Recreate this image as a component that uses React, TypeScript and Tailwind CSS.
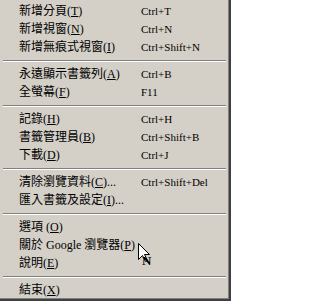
import React from "react";

type Item = { label: string; key: string; rest?: string; shortcut?: string };

// each group is separated by a etched line
const groups: Item[][] = [
  [
    { label: "新增分頁(", key: "T", rest: ")", shortcut: "Ctrl+T" },
    { label: "新增視窗(", key: "N", rest: ")", shortcut: "Ctrl+N" },
    { label: "新增無痕式視窗(", key: "I", rest: ")", shortcut: "Ctrl+Shift+N" },
  ],
  [
    { label: "永遠顯示書籤列(", key: "A", rest: ")", shortcut: "Ctrl+B" },
    { label: "全螢幕(", key: "F", rest: ")", shortcut: "F11" },
  ],
  [
    { label: "記錄(", key: "H", rest: ")", shortcut: "Ctrl+H" },
    { label: "書籤管理員(", key: "B", rest: ")", shortcut: "Ctrl+Shift+B" },
    { label: "下載(", key: "D", rest: ")", shortcut: "Ctrl+J" },
  ],
  [
    { label: "清除瀏覽資料(", key: "C", rest: ")...", shortcut: "Ctrl+Shift+Del" },
    { label: "匯入書籤及設定(", key: "I", rest: ")..." },
  ],
  [
    { label: "選項 (", key: "O", rest: ")" },
    { label: "關於 Google 瀏覽器(", key: "P", rest: ")" },
    { label: "說明(", key: "E", rest: ")" },
  ],
  [{ label: "結束(", key: "X", rest: ")" }],
];

const font = { fontFamily: '"Liberation Serif", "Noto Sans CJK TC", serif' };

const MenuRow = ({ item }: { item: Item }) => (
  <div className="flex h-[18px] shrink-0 items-center text-black">
    <div className="w-[141px] whitespace-nowrap pl-[19px] text-[12px] leading-[18px]">
      {item.label}
      <span className="underline underline-offset-1">{item.key}</span>
      {item.rest}
    </div>
    {item.shortcut && (
      <div className="whitespace-nowrap text-[11px] leading-[18px]">{item.shortcut}</div>
    )}
  </div>
);

const Separator = () => (
  <div className="flex h-[9px] shrink-0 flex-col justify-center pl-[3px] pr-[2px]">
    <div className="h-px bg-[#808080]" />
    <div className="h-px bg-white" />
  </div>
);

const Cursor = () => (
  <div className="pointer-events-none absolute left-[138px] top-[243px]">
    <svg width="13" height="20" viewBox="0 0 13 20" className="block">
      <path
        d="M0.5 0.5 L0.5 16.5 L4.5 12.5 L7.5 18.5 L9.5 17.5 L6.5 11.5 L11.5 11.5 Z"
        fill="white"
        stroke="black"
        strokeWidth="1"
      />
    </svg>
    <span
      className="absolute left-[4px] top-[11px] text-[13px] font-bold leading-none text-black"
      style={font}
    >
      N
    </span>
  </div>
);

export default function App() {
  return (
    <div className="flex h-[301px] w-[231px] border-b-2 border-r-2 border-[#404040] bg-[#d4d0c8]" style={font}>
      <div className="relative flex flex-1 flex-col overflow-hidden border-b border-r border-[#808080] pt-[2px]">
        {groups.map((group, i) => (
          <React.Fragment key={i}>
            {i > 0 && <Separator />}
            {group.map((item) => (
              <MenuRow key={item.label} item={item} />
            ))}
          </React.Fragment>
        ))}
        <Cursor />
      </div>
    </div>
  );
}
